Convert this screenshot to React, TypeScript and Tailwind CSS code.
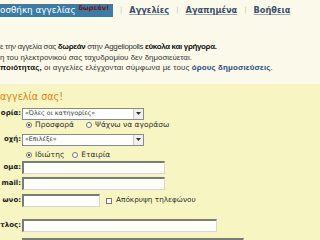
import React from 'react';

const label = "w-[22px] shrink-0 text-right text-[7px] font-bold text-[#222] pr-[1px] overflow-hidden whitespace-nowrap flex justify-end";

function Select({ text, width }: { text: string; width: string }) {
  return (
    <div className={`${width} h-[12px] bg-white border border-[#8a8a8a] flex items-center justify-between`}>
      <span className="text-[6.3px] text-[#333] pl-[2px] leading-none">{text}</span>
      <span className="w-[10px] h-[10px] bg-[#f0f0f0] border-l border-[#c8c8c8] flex items-center justify-center">
        <svg width="5" height="3" viewBox="0 0 5 3"><path d="M0 0h5L2.5 3z" fill="#333" /></svg>
      </span>
    </div>
  );
}

function Radio({ on }: { on?: boolean }) {
  return (
    <span className="w-[6px] h-[6px] rounded-full border border-[#777] bg-white flex items-center justify-center">
      {on && <span className="w-[2px] h-[2px] rounded-full bg-[#222]" />}
    </span>
  );
}

function Input({ width }: { width: string }) {
  return <div className={`${width} h-[13px] shrink-0 bg-[#fffffa] border-t-2 border-l-2 border-[#7b7b7b] border-r border-b border-r-[#d8d8d0] border-b-[#d8d8d0]`} />;
}

export default function App() {
  return (
    <div className="w-[320px] h-[240px] overflow-hidden bg-[#fbfaea] font-['DejaVu_Sans',sans-serif] text-[#222]">
      <div className="pt-[4px] flex items-center h-[17px]">
        <div className="w-[113px] h-[13px] shrink-0 bg-[#3a7ca6] flex items-center overflow-hidden">
          <span className="text-white text-[8.8px] leading-none whitespace-nowrap">οσθήκη αγγελίας</span>
          <span className="ml-[3px] self-start mt-[1px] text-[6.6px] font-bold text-[#7a1414] leading-none whitespace-nowrap">δωρεάν!</span>
        </div>
        <div className="ml-[7px] flex items-center gap-[7px] text-[8.2px] font-bold text-[#3d4f6b] leading-none whitespace-nowrap">
          <span className="text-[#c4bfa8] font-normal text-[7px]">|</span>
          <span className="underline decoration-[#9aa]">Αγγελίες</span>
          <span className="text-[#c4bfa8] font-normal text-[7px]">|</span>
          <span className="underline decoration-[#9aa]">Αγαπημένα</span>
          <span className="text-[#c4bfa8] font-normal text-[7px]">|</span>
          <span className="underline decoration-[#9aa]">Βοήθεια</span>
        </div>
      </div>

      <div className="mt-[25px] font-['Liberation_Sans',sans-serif] text-[7.9px] leading-[10.5px] text-[#333] whitespace-nowrap">
        <p className="tracking-[-0.3px]">ε την αγγελία σας <b className="text-[#111]">δωρεάν</b> στην Aggeliopolis <b className="text-[#111]">εύκολα και γρήγορα.</b></p>
        <p>η του ηλεκτρονικού σας ταχυδρομίου δεν δημοσιεύεται.</p>
        <p className="tracking-[0.15px]"><b className="text-[#111]">ποιότητας,</b> οι αγγελίες ελέγχονται σύμφωνα με τους <b className="text-[#2a4a80]">όρους δημοσιεύσεις</b>.</p>
      </div>

      <div className="mt-[10px] h-[200px] bg-[#f7f5c2] pt-[8px]">
        <div className="text-[9.6px] text-[#e0840f] leading-none whitespace-nowrap">αγγελία σας!</div>

        <div className="mt-[6px] flex flex-col">
          <div className="flex items-center h-[13px]">
            <div className={label}>ορία:</div>
            <Select text="«Όλες οι κατηγορίες»" width="w-[122px]" />
          </div>
          <div className="flex items-center h-[10px] pl-[26px] gap-[3px] text-[7.5px] text-[#333] whitespace-nowrap">
            <Radio on /> <span>Προσφορά</span>
            <span className="ml-[9px]"><Radio /></span> <span>Ψάχνω να αγοράσω</span>
          </div>
          <div className="mt-[3px] flex items-center h-[13px]">
            <div className={label}>οχή:</div>
            <Select text="«Επιλέξε»" width="w-[122px]" />
          </div>
          <div className="mt-[4px] flex items-center h-[10px] pl-[26px] gap-[3px] text-[7.5px] text-[#333] whitespace-nowrap">
            <Radio on /> <span>Ιδιώτης</span>
            <span className="ml-[5px]"><Radio /></span> <span>Εταιρία</span>
          </div>
          <div className="mt-[1px] flex items-center h-[13px]">
            <div className={label}>ομα:</div>
            <Input width="w-[143px]" />
          </div>
          <div className="mt-[3px] flex items-center h-[13px]">
            <div className={label}>mail:</div>
            <Input width="w-[143px]" />
          </div>
          <div className="mt-[4px] flex items-center h-[13px]">
            <div className={label}>ωνο:</div>
            <Input width="w-[78px]" />
            <span className="ml-[6px] w-[6px] h-[6px] border border-[#777] bg-white" />
            <span className="ml-[4px] text-[7.3px] text-[#333] whitespace-nowrap">Απόκρυψη τηλεφώνου</span>
          </div>
          <div className="mt-[12px] flex items-center h-[13px]">
            <div className={label}>τλος:</div>
            <Input width="w-[195px]" />
          </div>
          <div className="mt-[6px] flex items-center h-[13px]">
            <div className={label}>λίσι:</div>
            <Input width="w-[222px]" />
          </div>
        </div>
      </div>
    </div>
  );
}
